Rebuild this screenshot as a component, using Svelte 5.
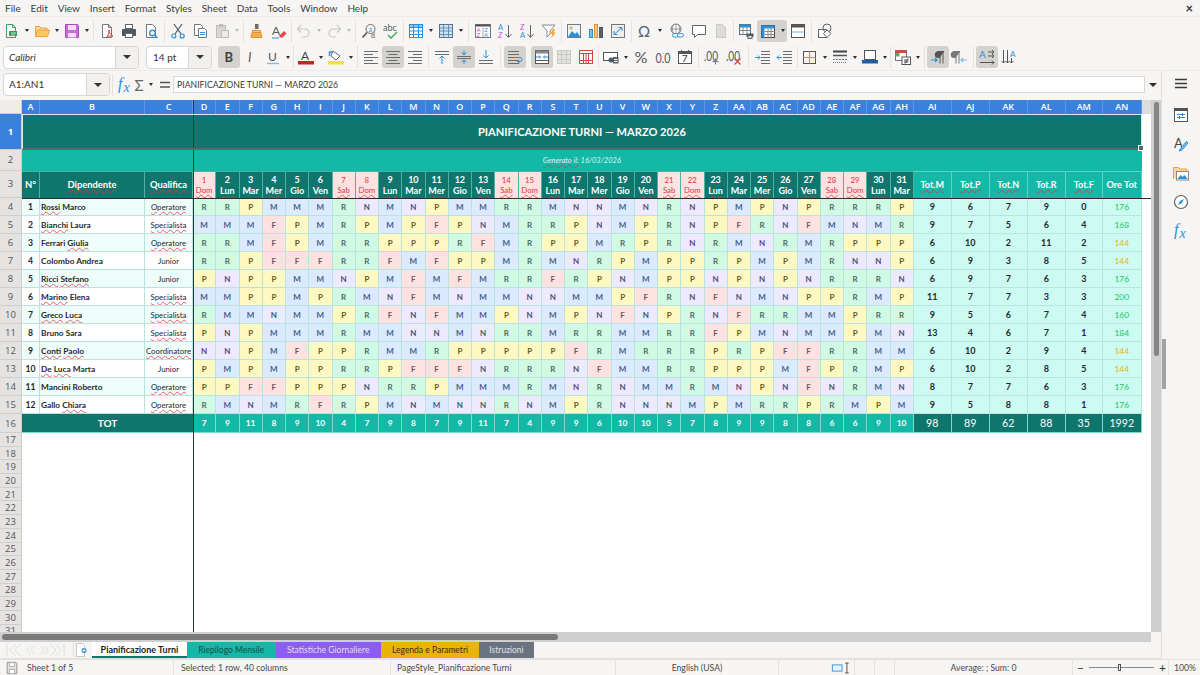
<script>
	const menus = ['File', 'Edit', 'View', 'Insert', 'Format', 'Styles', 'Sheet', 'Data', 'Tools', 'Window', 'Help'];

	const flagged = new Set([
		'Rossi', 'Bianchi', 'Giulia', 'Ricci', 'Stefano', 'Marino', 'Greco', 'Luca', 'Conti', 'Paolo', 'De', 'Chiara',
		'Operatore', 'Specialista', 'Coordinatore', 'Dipendente', 'Qualifica', 'Generato', 'il:',
		'Lun', 'Mer', 'Ven', 'Sab', 'Dom', 'Tot.M', 'Tot.P', 'Tot.N', 'Tot.R', 'Tot.F'
	]);

	const colNames = ['A', 'B', 'C', 'D', 'E', 'F', 'G', 'H', 'I', 'J', 'K', 'L', 'M', 'N', 'O', 'P', 'Q', 'R', 'S', 'T', 'U', 'V', 'W', 'X', 'Y', 'Z',
		'AA', 'AB', 'AC', 'AD', 'AE', 'AF', 'AG', 'AH', 'AI', 'AJ', 'AK', 'AL', 'AM', 'AN'];

	const weekdays = ['Dom', 'Lun', 'Mar', 'Mer', 'Gio', 'Ven', 'Sab'];
	const days = Array.from({ length: 31 }, (_, i) => ({ n: i + 1, name: weekdays[i % 7], off: i % 7 === 0 || i % 7 === 6 }));

	const people = [
		{ name: 'Rossi Marco', role: 'Operatore', shifts: 'RRPMMMRNMNPMMRRMNNMNRNPMPNPRRRP', tot: [9, 6, 7, 9, 0], ore: 176 },
		{ name: 'Bianchi Laura', role: 'Specialista', shifts: 'MMMFPMRPMPFPNMRRPNMPRNPFRNFMNMR', tot: [9, 7, 5, 6, 4], ore: 168 },
		{ name: 'Ferrari Giulia', role: 'Operatore', shifts: 'RRMFPMRRPPPRFMRPPMRPRNRMNRMRPPP', tot: [6, 10, 2, 11, 2], ore: 144 },
		{ name: 'Colombo Andrea', role: 'Junior', shifts: 'RRPFFFRRFMFPPMRMNRPMPPRPMPMRNNP', tot: [6, 9, 3, 8, 5], ore: 144 },
		{ name: 'Ricci Stefano', role: 'Junior', shifts: 'PNPPMMNPMFMFMRRFRPNMPPNPNPNRRRN', tot: [6, 9, 7, 6, 3], ore: 176 },
		{ name: 'Marino Elena', role: 'Specialista', shifts: 'MMPPMPRMNFMNMMNNMMPFRNFNMNPPRMP', tot: [11, 7, 7, 3, 3], ore: 200 },
		{ name: 'Greco Luca', role: 'Specialista', shifts: 'RMMNMMPRFNFMMPNMPNFNPRNFRRMMPRR', tot: [9, 5, 6, 7, 4], ore: 160 },
		{ name: 'Bruno Sara', role: 'Specialista', shifts: 'PNPMMMRMMNNMNRRMRRMMRRFPMNMMPMN', tot: [13, 4, 6, 7, 1], ore: 184 },
		{ name: 'Conti Paolo', role: 'Coordinatore', shifts: 'NNPMFPPRMMRPPPPPFRMRRRPRPFFRRMM', tot: [6, 10, 2, 9, 4], ore: 144 },
		{ name: 'De Luca Marta', role: 'Junior', shifts: 'PMPMPPRRPFFFNRRRNFMMRRPPPMFPRMP', tot: [6, 10, 2, 8, 5], ore: 144 },
		{ name: 'Mancini Roberto', role: 'Operatore', shifts: 'PPFFPPPNRRPMMMRMNRNMMRMNPNFNRMN', tot: [8, 7, 7, 6, 3], ore: 176 },
		{ name: 'Gallo Chiara', role: 'Operatore', shifts: 'RMNMRFRPMNMNNRNMPRNNNMPMRRPRMPM', tot: [9, 5, 8, 8, 1], ore: 176 }
	];

	const dayTotals = [7, 9, 11, 8, 9, 10, 4, 7, 9, 8, 7, 9, 11, 7, 4, 9, 9, 6, 10, 10, 5, 7, 8, 9, 9, 8, 8, 6, 6, 9, 10];
	const grandTotals = [98, 89, 62, 88, 35, 1992];
	const emptyRows = Array.from({ length: 15 }, (_, i) => i + 17);

	// split on spaces so the spellcheck squiggle only lands on the flagged words
	const words = (text) => text.split(' ').map((w) => ({ w, bad: flagged.has(w) }));

	const bars = (ys, x1, x2, c = '#6b6b6b') => `<path d="${ys.map((y) => `M${x1} ${y}H${x2}`).join('')}" stroke="${c}"/>`;
	const lbl = (x, y, t, size, c, extra = '') =>
		`<text x="${x}" y="${y}" font-family="Lato, sans-serif" font-size="${size}" fill="${c}" stroke="none" ${extra}>${t}</text>`;
	const pilcrow = (x, c) =>
		`<path d="M${x + 6} 2.5H${x}a3.2 3.2 0 000 6.4h1.5" fill="${c}" stroke="none"/><path d="M${x - 1} 2.5h7M${x + 2} 2.5v12M${x + 5} 2.5v12" stroke="${c}"/>`;
	const FIVE = [2.5, 5.5, 8.5, 11.5, 14.5];

	const icons = {
		new: `<path d="M2.5 1.5h6l3 3v10h-9z" fill="#fff" stroke="#3f9e63"/><path d="M8.5 1.5v3h3" stroke="#3f9e63"/><rect x="5" y="8" width="8" height="5" fill="#2f9a5c"/><path d="M7 10h5M7 12h4" stroke="#bfe6cd"/>`,
		open: `<path d="M1.5 13.5v-10h4l1.5 1.5h6v2" fill="#fbd79b" stroke="#e9a441"/><path d="M1.5 13.5l2-6.5h12l-2 6.5z" fill="#fcc56e" stroke="#e9a441"/>`,
		save: `<path d="M1.5 1.5h12l1 1v12h-13z" fill="#c76fd6" stroke="#a64bb8"/><rect x="4" y="2" width="8" height="5" fill="#f4dcf8"/><rect x="4" y="10" width="8" height="4.5" fill="#f4dcf8"/>`,
		pdf: `<path d="M3.5 1.5h6l3 3v10h-9z" fill="#fff" stroke="#777"/><path d="M9.5 1.5v3h3" stroke="#777"/><path d="M8 14c2-3 2-6 2-7 0 3 2 5 4 6-3 0-4 0-6 1z" stroke="#d9453d"/>`,
		print: `<rect x="4.5" y="1.5" width="7" height="4" fill="#fff" stroke="#666"/><path d="M1.5 6.5h13v6h-13z" fill="#4b5965" stroke="#4b5965"/><rect x="4.5" y="10.5" width="7" height="4" fill="#fff" stroke="#666"/>`,
		preview: `<path d="M3.5 1.5h6l3 3v10h-9z" fill="#fff" stroke="#777"/><circle cx="9.5" cy="10" r="2.8" stroke="#2d8fd5" stroke-width="1.4"/><path d="M11.5 12l3 3" stroke="#2d8fd5" stroke-width="1.6"/>`,
		cut: `<path d="M4 1l7 10M12 1L5 11" stroke="#4b5965" stroke-width="1.2"/><circle cx="3.8" cy="13" r="2" stroke="#2d8fd5" stroke-width="1.2"/><circle cx="12.2" cy="13" r="2" stroke="#2d8fd5" stroke-width="1.2"/>`,
		copy: `<path d="M2.5 1.5h6l2 2v9h-8z" fill="#fff" stroke="#777"/><path d="M6.5 5.5h6l2 2v7h-8z" fill="#fff" stroke="#777"/>${bars([9.5, 11.5], 8, 13, '#2d8fd5')}`,
		paste: `<rect x="2.5" y="2.5" width="9" height="12" fill="#d6d6d4" stroke="#bdbdbb"/><rect x="5" y="1" width="4" height="3" fill="#bdbdbb"/><rect x="7.5" y="7.5" width="7" height="7" fill="#ecebe9" stroke="#bdbdbb"/>`,
		clone: `<rect x="6" y="1" width="3.5" height="5" fill="#6b6b6b"/><path d="M3.5 7.5h8v2h-8z" fill="#f8c471" stroke="#e0943a"/><path d="M3 9.5h9l1 5H2z" fill="#f6ae4b" stroke="#e0943a"/>`,
		clear: `${lbl(1, 12, 'A', 12, '#55606b')}<path d="M8 13l5-5 2.5 2.5-4 4H9z" fill="#e8444b"/><path d="M1 15h7" stroke="#2d8fd5"/>`,
		undo: `<path d="M5 2L1.5 6 5 9.5M2 6h7a4 4 0 010 8H6" stroke="#c8c8c6" stroke-width="1.2"/>`,
		redo: `<path d="M11 2l3.5 4L11 9.5M14 6H7a4 4 0 000 8h3" stroke="#c8c8c6" stroke-width="1.2"/>`,
		find: `<circle cx="9.5" cy="6" r="4.5" stroke="#6b6b6b"/>${lbl(7.5, 8.5, 'a', 7, '#2d8fd5')}<path d="M6 9.5L1.5 14.5" stroke="#555" stroke-width="1.6"/>${lbl(10, 15, 'd', 7, '#555')}`,
		spell: `${lbl(0, 8, 'abc', 9, '#55606b')}<path d="M5 12l3 3 6-6" stroke="#3da560" stroke-width="1.4"/>`,
		table: `<rect x="1.5" y="1.5" width="13" height="13" fill="#fff" stroke="#2d8fd5"/><rect x="1.5" y="1.5" width="13" height="3" fill="#8cc4ea" stroke="#2d8fd5"/><path d="M5.5 1.5v13M10.5 1.5v13M1.5 8h13M1.5 11.5h13" stroke="#2d8fd5"/>`,
		cols: `<rect x="1.5" y="1.5" width="13" height="13" fill="#cfe5f6" stroke="#5f6f7f"/><path d="M5.5 1.5v13M10.5 1.5v13M1.5 5h13M1.5 8h13M1.5 11.5h13" stroke="#5f8fb7"/>`,
		sortbox: `<rect x="0.5" y="1.5" width="15" height="13" fill="#fff" stroke="#777"/><rect x="0.5" y="1.5" width="15" height="2" fill="#555"/><path d="M8 3v11" stroke="#aaa"/>${lbl(1.5, 9, 'A', 6, '#c14fd0')}${lbl(1.5, 14, 'Z', 6, '#c14fd0')}${lbl(9, 9, 'Z', 6, '#2d8fd5')}${lbl(9, 14, 'A', 6, '#2d8fd5')}`,
		sortasc: `${lbl(1, 7, 'A', 7.5, '#2d8fd5')}${lbl(1, 15, 'Z', 7.5, '#c14fd0')}<path d="M11.5 2v12M8.5 11l3 3.5 3-3.5" stroke="#666"/>`,
		sortdesc: `${lbl(1, 7, 'Z', 7.5, '#c14fd0')}${lbl(1, 15, 'A', 7.5, '#2d8fd5')}<path d="M11.5 2v12M8.5 11l3 3.5 3-3.5" stroke="#666"/>`,
		filter: `<path d="M1 2h13L9 8v3l-3 3V8z" fill="#fff" stroke="#8a8a8a"/><path d="M12 6l-3 5h2.5L10 15.5 15 9.5h-2.5L14 6z" fill="#f2a53a"/>`,
		image: `<rect x="1.5" y="1.5" width="13" height="13" fill="#e9f4fb" stroke="#777"/><circle cx="5" cy="5" r="1.5" fill="#f2a53a"/><path d="M2 14l4-6 3 3 2-2 3.5 5z" fill="#2d8fd5"/>`,
		chart: `<rect x="1.5" y="6.5" width="3" height="8" fill="#7cbbe8" stroke="#2d8fd5"/><rect x="6.5" y="1.5" width="3" height="13" fill="#f8c471" stroke="#e0943a"/><rect x="11.5" y="4.5" width="3" height="10" fill="#55606b" stroke="#4b5965"/>`,
		pivot: `<rect x="1.5" y="1.5" width="13" height="13" fill="#eee" stroke="#777"/><path d="M4 11.5L12 4.5M12 4.5H8.5M12 4.5V8M4 11.5h3.5M4 11.5V8" stroke="#2d8fd5"/>`,
		omega: `${lbl(1, 14, 'Ω', 15, '#55606b')}`,
		link: `<circle cx="7" cy="6" r="5" fill="#fff" stroke="#777"/><path d="M2 6h10M7 1v10M4.5 1.8c-1.5 3-1.5 5.4 0 8.4M9.5 1.8c1.5 3 1.5 5.4 0 8.4" stroke="#777" stroke-width=".7"/><rect x="3.5" y="10.5" width="6" height="3.5" rx="1.7" fill="#fff" stroke="#2d8fd5"/><rect x="8.5" y="10.5" width="6" height="3.5" rx="1.7" fill="#fff" stroke="#2d8fd5"/>`,
		comment: `<path d="M1.5 2.5h13v9h-8l-3 3v-3h-2z" fill="#fff" stroke="#666"/>`,
		sheetdoc: `<path d="M3.5 1.5h6l3 3v10h-9z" fill="#dcdcda" stroke="#c8c8c6"/>`,
		printarea: `<rect x="1.5" y="1.5" width="11" height="10" fill="#fff" stroke="#666"/><rect x="1.5" y="1.5" width="11" height="3" fill="#2d8fd5"/><path d="M5 4v8M9 4v8M1.5 7.5h11" stroke="#8a8a8a"/><path d="M8.5 10.5h7v3.5h-7z" fill="#4b5965"/><rect x="10" y="12.5" width="4" height="3" fill="#ddd" stroke="#666"/>`,
		freeze: `<rect x="1.5" y="2.5" width="13" height="12" fill="#fff" stroke="#444"/><rect x="1.5" y="2.5" width="13" height="3" fill="#2d8fd5"/><rect x="1.5" y="2.5" width="3" height="12" fill="#2d8fd5"/><path d="M8 5.5v9M11 5.5v9M4.5 8.5h10M4.5 11.5h10" stroke="#8a8a8a"/>`,
		split: `<rect x="1.5" y="1.5" width="13" height="13" fill="#fff" stroke="#555"/><rect x="1.5" y="1.5" width="13" height="3" fill="#555"/><path d="M1.5 9h13" stroke="#2d8fd5" stroke-dasharray="2 1"/>`,
		shapes: `<rect x="1.5" y="6.5" width="8" height="8" fill="#fff" stroke="#666"/><circle cx="10" cy="5" r="4" fill="none" stroke="#666"/><path d="M10 7l4 3.5-4 4-3.5-4z" fill="#fff" stroke="#666"/>`,

		bold: `${lbl(3.5, 13, 'B', 13, '#3f3f3f', 'font-weight="700"')}`,
		italic: `${lbl(5, 13, 'I', 13, '#555', 'font-style="italic"')}`,
		under: `${lbl(3, 12, 'U', 12, '#555')}<path d="M2 14.5h12" stroke="#7cbbe8" stroke-width="1.4"/>`,
		fontcolor: `${lbl(3, 11, 'A', 12, '#444')}<rect x="0" y="12" width="16" height="3.5" fill="#c9211e"/>`,
		highlight: `<path d="M5 2l7 5-4 4-5-4z" fill="#fff" stroke="#666"/><path d="M1.5 7V3h3" stroke="#2d8fd5" stroke-width="1.4"/><rect x="0" y="12" width="16" height="3.5" fill="#f5e625"/>`,
		left: `<path d="M1 2.5h14M1 5.5h9M1 8.5h14M1 11.5h9M1 14.5h14" stroke="#6b6b6b"/>`,
		center: `<path d="M1 2.5h14M3.5 5.5h9M1 8.5h14M3.5 11.5h9M1 14.5h14" stroke="#6b6b6b"/>`,
		right: `<path d="M1 2.5h14M6 5.5h9M1 8.5h14M6 11.5h9M1 14.5h14" stroke="#6b6b6b"/>`,
		vtop: `${bars([2.5, 5.5], 1, 15)}<path d="M8 15V7M5.5 9.5L8 7l2.5 2.5" stroke="#2d8fd5"/>`,
		vcenter: `${bars([7.5, 9.5], 1, 15)}<path d="M8 1v5M5.5 3.5L8 6l2.5-2.5M8 15v-4M5.5 13L8 11l2.5 2" stroke="#2d8fd5"/>`,
		vbottom: `${bars([11.5, 14.5], 1, 15)}<path d="M8 1v8M5.5 6.5L8 9l2.5-2.5" stroke="#2d8fd5"/>`,
		wrap: `${bars(FIVE, 1, 12)}<path d="M6 8.5h7a1.5 1.5 0 010 4H11M12.5 11l-2 1.5 2 1.5" stroke="#2d8fd5"/>`,
		merge: `<rect x="1.5" y="1.5" width="13" height="13" fill="#fff" stroke="#555"/><rect x="1.5" y="1.5" width="13" height="3" fill="#888"/><path d="M1.5 11.5h13" stroke="#555"/><path d="M2 8h4.5M14 8H9.5M5 6.5L6.5 8 5 9.5M11 6.5L9.5 8l1.5 1.5" stroke="#2d8fd5"/>`,
		unmerge: `<rect x="1.5" y="1.5" width="13" height="13" fill="#e2e2e0" stroke="#c8c8c6"/><path d="M5.5 1.5v13M10.5 1.5v13M1.5 5.5h13M1.5 10.5h13" stroke="#c8c8c6"/>`,
		splitcell: `<rect x="1.5" y="1.5" width="13" height="13" fill="#fff" stroke="#d9453d"/><path d="M5.5 4v10.5M8 4v10.5M10.5 4v10.5M1.5 4.5h13M1.5 11.5h13" stroke="#d9453d"/>`,
		currency: `<rect x="0.5" y="3.5" width="14" height="8" fill="#fff" stroke="#555"/><circle cx="8" cy="11" r="2.5" fill="#4b5965"/><rect x="10" y="8" width="5.5" height="6.5" fill="#55606b"/><path d="M11 10.5h3.5M11 12.5h3.5" stroke="#fff"/>`,
		percent: `${lbl(1.5, 13.5, '%', 15, '#555', 'textLength="13" lengthAdjust="spacingAndGlyphs"')}`,
		number: `${lbl(0.5, 13.5, '0.0', 14, '#555', 'textLength="15" lengthAdjust="spacingAndGlyphs"')}`,
		date: `<rect x="1.5" y="2.5" width="13" height="12" fill="#fff" stroke="#555"/><rect x="1.5" y="2.5" width="13" height="2.5" fill="#555"/><path d="M4.5 1v2M11.5 1v2" stroke="#555"/>${lbl(5, 13, '7', 9.5, '#555', 'font-weight="700"')}`,
		adddec: `${lbl(0, 11.5, '.00', 12.5, '#555', 'textLength="14" lengthAdjust="spacingAndGlyphs"')}<path d="M11.5 9.5v6M8.5 12.5h6" stroke="#2d8fd5" stroke-width="1.2"/>`,
		deldec: `${lbl(0, 11.5, '.00', 12.5, '#555', 'textLength="14" lengthAdjust="spacingAndGlyphs"')}<path d="M8.5 9.5l6 6M14.5 9.5l-6 6" stroke="#d9453d" stroke-width="1.2"/>`,
		indent: `${bars(FIVE, 6, 15)}<path d="M0 8.5h5M3 6.5l2 2-2 2" stroke="#2d8fd5"/>`,
		outdent: `${bars(FIVE, 6, 15)}<path d="M0 8.5h5M2 6.5l-2 2 2 2" stroke="#2d8fd5"/>`,
		borders: `<rect x="1.5" y="2.5" width="12" height="12" stroke="#555"/><path d="M7.5 2.5v12M1.5 8.5h12" stroke="#d98a30"/>`,
		bstyle: `<path d="M1 2.5h14" stroke="#444" stroke-width="2"/><path d="M1 6.5h14" stroke="#555" stroke-width="1.5"/><path d="M1 10.5h14" stroke="#777" stroke-dasharray="2 1"/><path d="M1 13.5h14" stroke="#777" stroke-dasharray="1 1"/>`,
		bcolor: `<rect x="2.5" y="1.5" width="11" height="9" fill="#fff" stroke="#555"/><rect x="0" y="11" width="16" height="3.5" fill="#1c5fa8"/>`,
		cond: `<rect x="0.5" y="1.5" width="11" height="10" fill="#fff" stroke="#777"/><rect x="0.5" y="1.5" width="11" height="2.5" fill="#d9453d"/><rect x="0.5" y="4" width="4" height="3.5" fill="#4fae6b"/><rect x="7" y="8" width="8.5" height="7.5" fill="#fff" stroke="#555"/><path d="M9 11h4.5M9 13h4.5M10 14.5l3-5" stroke="#444"/>`,
		ltr: `${pilcrow(8, '#555')}<path d="M1 11h6M5 9l2 2-2 2" stroke="#2d8fd5" stroke-width="1.2"/>`,
		rtl: `${pilcrow(2, '#777')}<path d="M15 11H9M11 9l-2 2 2 2" stroke="#7cbbe8" stroke-width="1.2"/>`,
		horiz: `${lbl(0, 9, 'A', 10, '#2d8fd5')}<path d="M9 3h6M13 1l2 2-2 2M9 7h6M13 5l2 2-2 2M1 13.5h14M13 11.5l2 2-2 2" stroke="#555"/>`,
		vert: `<path d="M2.5 1v13M.5 12l2 2 2-2M6.5 1v13M4.5 12l2 2 2-2M10.5 9v5M8.5 12l2 2 2-2" stroke="#555"/>${lbl(9, 8, 'A', 8, '#2d8fd5')}`,

		burger: `<path d="M2 3.5h12M2 7.5h12M2 11.5h12" stroke="#3a3a3a" stroke-width="1.4"/>`,
		props: `<rect x="1.5" y="1.5" width="13" height="13" fill="#fff" stroke="#555"/><rect x="1.5" y="1.5" width="13" height="2.5" fill="#555"/><path d="M4 7.5h8M4 10.5h8" stroke="#2d8fd5"/><path d="M9.5 6v3M6.5 9v3" stroke="#2d8fd5"/>`,
		styles: `${lbl(1, 12, 'A', 13, '#444')}<path d="M6 15l3-1 6-7-1.5-1.5-6 7z" fill="#7cbbe8" stroke="#2d8fd5"/>`,
		gallery: `<path d="M.5 14V2.5h5L7 4h7v2" fill="#fbd79b" stroke="#e9a441"/><rect x="3.5" y="6.5" width="12" height="8.5" fill="#fff" stroke="#888"/><path d="M4.5 14l3-4 2 2 2-2 3 4z" fill="#2d8fd5"/>`,
		nav: `<circle cx="8" cy="8" r="6.5" fill="#fff" stroke="#666" stroke-width="1.2"/><path d="M11 5L9 9 5 11l2-4z" fill="#2d8fd5"/>`,
		fx: `<text x="1" y="12" font-family="Liberation Serif, serif" font-style="italic" font-size="16" fill="#2d8fd5">f</text><text x="6.5" y="14.5" font-family="Liberation Serif, serif" font-style="italic" font-size="14" fill="#2d8fd5">x</text>`,
		sigma: `${lbl(2.5, 14, 'Σ', 15, '#666')}`,
		equals: `<path d="M3 5.5h10M3 10h10" stroke="#555" stroke-width="1.6"/>`
	};

	const topTools = ['new', 'v', 'open', 'v', 'save', 'v', '|', 'pdf', 'print', 'preview', '|', 'cut', 'copy', 'paste', 'g', '|',
		'clone', 'clear', '!', 'undo', 'g', 'redo', 'g', '|', 'find', 'spell', '!', 'table', 'v', 'cols', 'v', '#',
		'sortbox', 'sortasc', 'sortdesc', 'filter', '!', 'image', 'chart', 'pivot', '|', 'omega', 'v', '~', 'link', 'comment', 'sheetdoc', '!',
		'printarea', 'freeze*', 'v*', 'split', '|', 'shapes'];

	const fontTools = ['bold*', 'italic', 'under', 'v', '!', 'fontcolor', 'v', 'highlight', 'v', '|', 'left', 'center*', 'right', '|',
		'vtop', 'vcenter*', 'vbottom', '#', 'wrap*', '_', 'merge*', 'unmerge', 'splitcell', '!', 'currency', 'v', 'percent', 'number', 'date', '|',
		'adddec', 'deldec', '#', 'indent', 'outdent', '!', 'borders', 'v', 'bstyle', 'v', 'bcolor', 'v', '!', 'cond', 'v', '|', 'ltr*', 'rtl', '|', 'horiz*', 'vert'];

	const sideIcons = ['props', 'styles', 'gallery', 'nav', 'fx'];

	const tabs = [
		{ label: 'Pianificazione Turni', cls: 'current' },
		{ label: 'Riepilogo Mensile', cls: 'teal' },
		{ label: 'Statistiche Giornaliere', cls: 'purple' },
		{ label: 'Legenda e Parametri', cls: 'amber' },
		{ label: 'Istruzioni', cls: 'slate' }
	];

	const statusCells = [
		{ cls: 'c-sheet', text: 'Sheet 1 of 5' },
		{ cls: 'c-sel', text: 'Selected: 1 row, 40 columns' },
		{ cls: 'c-page', text: 'PageStyle_Pianificazione Turni' },
		{ cls: 'c-lang', text: 'English (USA)' }
	];
</script>

{#snippet glyph(name)}
	<svg class="ico" width="16" height="16" viewBox="0 0 16 16" fill="none" aria-hidden="true">{@html icons[name]}</svg>
{/snippet}

{#snippet tools(list)}
	{#each list as token}
		{#if token === '|' || token === '!' || token === '#'}
			<span class="sep" class:thin={token === '!'} class:wide={token === '#'}></span>
		{:else if token === '~'}
			<span class="spacer"></span>
		{:else if token === '_'}
			<span class="spacer gap"></span>
		{:else if token === 'v' || token === 'v*' || token === 'g'}
			<span class="drop" class:on={token === 'v*'} class:off={token === 'g'}></span>
		{:else}
			<span class="btn" class:on={token.endsWith('*')} class:joined={token === 'freeze*'}>
				{@render glyph(token.replace('*', ''))}
			</span>
		{/if}
	{/each}
{/snippet}

{#snippet spell(text)}
	<span>{#each words(text) as part, i}{i ? ' ' : ''}<span class:bad={part.bad}>{part.w}</span>{/each}</span>
{/snippet}

<div class="app">
	<nav class="menubar">
		{#each menus as m}
			<span>{m}</span>
		{/each}
		<span class="close">×</span>
	</nav>

	<div class="toolbar first">
		{@render tools(topTools)}
	</div>

	<div class="toolbar second">
		<div class="combo font"><span class="value">Calibri</span><span class="combo-arrow"></span></div>
		<div class="combo size"><span class="value">14 pt</span><span class="combo-arrow"></span></div>
		{@render tools(fontTools)}
	</div>

	<div class="workspace">
		<div class="left">
			<div class="formula">
				<div class="combo name"><span class="value">A1:AN1</span><span class="combo-arrow"></span></div>
				<span class="sep"></span>
				<span class="fbtn">{@render glyph('fx')}</span>
				<span class="fbtn">{@render glyph('sigma')}</span>
				<span class="drop"></span>
				<span class="fbtn eq">{@render glyph('equals')}</span>
				<div class="input">PIANIFICAZIONE TURNI — MARZO 2026</div>
				<span class="drop big"></span>
			</div>

			<div class="sheet-row">
				<div class="sheet">
					<div class="corner"></div>
					{#each colNames as name}
						<div class="colhead">{name}</div>
					{/each}
					<div class="colhead rest"></div>

					<div class="rowhead active">1</div>
					<div class="title">PIANIFICAZIONE TURNI — MARZO 2026</div>
					<div class="blank"></div>

					<div class="rowhead">2</div>
					<div class="subtitle">{@render spell('Generato il: 16/03/2026')}</div>
					<div class="blank"></div>

					<div class="rowhead">3</div>
					<div class="hd">N°</div>
					<div class="hd">{@render spell('Dipendente')}</div>
					<div class="hd">{@render spell('Qualifica')}</div>
					{#each days as d}
						<div class="day" class:off={d.off}>
							<span>{d.n}</span>
							{@render spell(d.name)}
						</div>
					{/each}
					{#each ['Tot.M', 'Tot.P', 'Tot.N', 'Tot.R', 'Tot.F'] as t}
						<div class="hd mid">{@render spell(t)}</div>
					{/each}
					<div class="hd mid plain">Ore Tot</div>
					<div class="blank"></div>

					{#each people as p, i}
						<div class="rowhead">{i + 4}</div>
						<div class="cell num" class:tint={i % 2 === 0}>{i + 1}</div>
						<div class="cell person" class:tint={i % 2 === 0}>{@render spell(p.name)}</div>
						<div class="cell role" class:tint={i % 2 === 0}>{@render spell(p.role)}</div>
						{#each p.shifts.split('') as s}
							<div class="cell shift {s}">{s}</div>
						{/each}
						{#each p.tot as v}
							<div class="cell sum">{v}</div>
						{/each}
						<div class="cell sum ore" class:low={p.ore < 150}>{p.ore}</div>
						<div class="blank"></div>
					{/each}

					<div class="rowhead">16</div>
					<div class="tot-label">TOT</div>
					{#each dayTotals as v}
						<div class="tot-day">{v}</div>
					{/each}
					{#each grandTotals as v}
						<div class="tot-grand">{v}</div>
					{/each}
					<div class="blank"></div>

					{#each emptyRows as r}
						<div class="rowhead">{r}</div>
						<div class="empty"></div>
					{/each}

					<div class="freeze-v"></div>
					<div class="freeze-h"></div>
					<div class="selection"><span class="handle"></span></div>
				</div>
				<div class="vscroll"><span class="vthumb"></span></div>
			</div>

			<div class="hscroll"><span class="hthumb"></span></div>

			<div class="tabbar">
				<svg class="nav-arrows" width="61" height="16" viewBox="0 0 62 16" fill="none" aria-hidden="true">
					<path d="M2 2v12M11 2L5 8l6 6M16 2l-6 6 6 6M26 4l-4 4 4 4M30 4l-4 4 4 4M36 4l4 4-4 4M40 4l4 4-4 4M46 2l6 6-6 6M51 2l6 6-6 6M60 2v12" stroke="#dcdcda" />
				</svg>
				<span class="tab-sep"></span>
				<svg class="add-sheet" width="16" height="16" viewBox="0 0 16 16" fill="none" aria-hidden="true">
					<path d="M1.5 1.5h6l2 2v11h-8z" fill="#fff" stroke="#c8c8c6" />
					<circle cx="9" cy="8.5" r="2.5" fill="#2d8fd5" />
					<path d="M7.5 8.5h3M9 7v3" stroke="#fff" />
				</svg>
				{#each tabs as tab}
					<span class="tab {tab.cls}">{tab.label}</span>
				{/each}
			</div>
		</div>

		<aside class="sidebar">
			<span class="side-burger">{@render glyph('burger')}</span>
			{#each sideIcons as name}
				<span class="side-btn">{@render glyph(name)}</span>
			{/each}
			<span class="side-handle"></span>
		</aside>
	</div>

	<footer class="status">
		<div class="st c-doc">
			<svg width="14" height="14" viewBox="0 0 16 16" fill="none" aria-hidden="true">
				<path d="M2.5 1.5h10l1 1v12h-11z" fill="#e4e4e2" stroke="#8a8a8a" />
				<rect x="5" y="2" width="6" height="4" fill="#fff" stroke="#aaa" />
				<rect x="5" y="9.5" width="6" height="5" fill="#fff" stroke="#aaa" />
			</svg>
		</div>
		{#each statusCells as c}
			<div class="st {c.cls}">{c.text}</div>
		{/each}
		<div class="st c-mode">
			<svg width="26" height="14" viewBox="0 0 26 14" fill="none" aria-hidden="true">
				<rect x="1.5" y="3.5" width="11" height="7" fill="#e8f2fa" stroke="#2d8fd5" />
				<path d="M16 1.5h4M16 12.5h4M18 1.5v11" stroke="#444" />
			</svg>
		</div>
		<div class="st c-a"></div>
		<div class="st c-b"></div>
		<div class="st c-sum">Average: ; Sum: 0</div>
		<div class="st c-zoom">
			<span class="zbtn">−</span>
			<span class="track"><span class="knob"></span></span>
			<span class="zbtn">+</span>
		</div>
		<div class="st c-pct">100%</div>
	</footer>
</div>

<style>
	:global(body) {
		margin: 0;
		background: #f6f5f4;
	}

	.app {
		width: 1200px;
		height: 675px;
		overflow: hidden;
		display: flex;
		flex-direction: column;
		background: #f6f5f4;
		color: #3d3d3d;
		font-family: Lato, 'Noto Sans', sans-serif;
		font-size: 10px;
	}

	.ico {
		overflow: visible;
	}

	.menubar {
		height: 17px;
		flex: none;
		display: flex;
		align-items: center;
		gap: 9.9px;
		padding-left: 5px;
		font-size: 10px;
		border-bottom: 1px solid #ecebe9;
		box-sizing: border-box;
	}

	.close {
		margin-left: auto;
		margin-right: 7px;
		font-size: 13px;
		font-weight: 700;
		color: #333;
	}

	.toolbar {
		flex: none;
		height: 27px;
		display: flex;
		align-items: center;
		box-sizing: border-box;
	}

	.first {
		padding-left: 1px;
	}

	.second {
		padding-left: 3px;
		border-bottom: 1px solid #ecebe9;
	}

	.btn {
		width: 22px;
		height: 22px;
		flex: none;
		display: flex;
		align-items: center;
		justify-content: center;
		border-radius: 3px;
	}

	.btn.on,
	.drop.on {
		background: #d3d2cf;
	}

	.btn.joined {
		border-radius: 3px 0 0 3px;
	}

	.drop {
		width: 8px;
		height: 22px;
		flex: none;
		display: flex;
		align-items: center;
		justify-content: center;
	}

	.drop.on {
		border-radius: 0 3px 3px 0;
	}

	.drop::after {
		content: '';
		border-left: 2.5px solid transparent;
		border-right: 2.5px solid transparent;
		border-top: 3px solid #2e2e2e;
	}

	.drop.off::after {
		border-top-color: #b9b9b7;
	}

	.drop.big::after {
		border-left-width: 4px;
		border-right-width: 4px;
		border-top-width: 4px;
	}

	.sep {
		width: 5px;
		height: 22px;
		flex: none;
		display: flex;
		justify-content: center;
	}

	.sep::after {
		content: '';
		width: 1px;
		background: #e4e3e1;
	}

	.sep.thin {
		width: 3px;
	}

	.sep.wide {
		width: 7px;
	}

	.spacer {
		width: 2px;
		flex: none;
	}

	.spacer.gap {
		width: 5px;
	}

	.combo {
		height: 23px;
		display: flex;
		flex: none;
		box-sizing: border-box;
		border: 1px solid #d7d6d4;
		border-radius: 4px;
		background: #fff;
		overflow: hidden;
	}

	.combo .value {
		flex: 1;
		padding-left: 5px;
		line-height: 21px;
		font-size: 10px;
		color: #333;
	}

	.combo-arrow {
		width: 22px;
		background: #f1f0ee;
		border-left: 1px solid #d7d6d4;
		display: flex;
		align-items: center;
		justify-content: center;
	}

	.combo-arrow::after {
		content: '';
		border-left: 4px solid transparent;
		border-right: 4px solid transparent;
		border-top: 4px solid #333;
	}

	.font {
		width: 136px;
		margin-right: 7px;
	}

	.font .value {
		font-style: italic;
	}

	.size {
		width: 66px;
		margin-right: 6px;
	}

	.size .value {
		padding-left: 6px;
	}

	.name {
		width: 107px;
		margin-left: 3px;
	}

	.workspace {
		flex: 1;
		min-height: 0;
		display: flex;
	}

	.left {
		width: 1161px;
		flex: none;
		display: flex;
		flex-direction: column;
		min-height: 0;
	}

	.formula {
		flex: none;
		height: 27px;
		display: flex;
		align-items: center;
	}

	.fbtn {
		width: 15px;
		height: 22px;
		flex: none;
		display: flex;
		align-items: center;
		justify-content: center;
	}

	.formula .sep {
		margin-right: 2px;
	}

	.eq {
		margin-left: 2.5px;
	}

	.input {
		flex: none;
		width: 972px;
		height: 17px;
		margin-left: 0.5px;
		box-sizing: border-box;
		padding-left: 3px;
		background: #fff;
		border: 1px solid #d9d8d6;
		font-size: 8.7px;
		line-height: 15px;
		color: #3a3a3a;
		white-space: nowrap;
	}

	.formula .drop.big {
		margin-left: 3px;
		width: 9px;
	}

	.sheet-row {
		flex: none;
		height: 534px;
		display: flex;
		padding-top: 2px;
		box-sizing: border-box;
	}

	.sheet {
		position: relative;
		width: 1151px;
		height: 532px;
		overflow: hidden;
		flex: none;
		background: #fff;
		display: grid;
		grid-template-columns: 22px 18px 105px 48px repeat(31, 23.258px) 38px 38px 38px 38px 37px 39px 9px;
		grid-template-rows: 14px 36px 20.5px 27.5px repeat(12, 18px) 19px repeat(15, 13.7px);
		font-family: Lato, 'Liberation Sans', sans-serif;
	}

	.corner {
		background: #eeedeb;
		border-right: 1px solid #cfcecb;
		border-bottom: 1px solid #cfcecb;
		box-sizing: border-box;
	}

	.colhead {
		background: #3a80df;
		border-right: 1px solid #5f97e6;
		box-sizing: border-box;
		color: #fff;
		font-family: 'Open Sans', 'Noto Sans', sans-serif;
		font-size: 9px;
		font-weight: 600;
		line-height: 14px;
		text-align: center;
		overflow: hidden;
	}

	.colhead.rest {
		background: #dddcda;
		border: 0;
	}

	.rowhead {
		grid-column: 1;
		background: #e4e3e1;
		border-bottom: 1px solid #cfcecb;
		border-right: 1px solid #cfcecb;
		box-sizing: border-box;
		color: #555;
		font-family: 'Open Sans', 'Noto Sans', sans-serif;
		font-size: 9.5px;
		display: flex;
		align-items: center;
		justify-content: center;
		overflow: hidden;
	}

	.rowhead.active {
		background: #3a80df;
		color: #fff;
		font-weight: 700;
	}

	.title {
		grid-column: span 40;
		background: #0f766e;
		color: #fff;
		font-size: 11.1px;
		font-weight: 700;
		display: flex;
		align-items: center;
		justify-content: center;
		padding-bottom: 2px;
		box-sizing: border-box;
	}

	.subtitle {
		grid-column: span 40;
		background: #14b8a6;
		color: #d5f7f0;
		font-size: 7.5px;
		font-style: italic;
		display: flex;
		align-items: center;
		justify-content: center;
		white-space: pre;
	}

	.hd {
		background: #0f766e;
		color: #fff;
		font-size: 9.4px;
		font-weight: 700;
		border-right: 1px solid #4fb0a3;
		border-top: 1px solid #4fb0a3;
		display: flex;
		align-items: center;
		justify-content: center;
		box-sizing: border-box;
		overflow: hidden;
	}

	.hd.mid {
		background: #14b8a6;
		border-color: #5fd2c4;
		font-size: 9px;
	}

	.hd.plain {
		font-size: 9.2px;
	}

	.day {
		display: flex;
		flex-direction: column;
		align-items: center;
		justify-content: center;
		background: #0f766e;
		color: #fff;
		border-right: 1px solid #4fb0a3;
		border-top: 1px solid #4fb0a3;
		box-sizing: border-box;
		font-size: 9px;
		font-weight: 700;
		line-height: 11px;
	}

	.day.off {
		background: #fee2e2;
		color: #e5333f;
		font-size: 7.8px;
		font-weight: 400;
		line-height: 10px;
	}

	.cell {
		display: flex;
		align-items: center;
		justify-content: center;
		border-right: 1px solid #b9e4dc;
		border-bottom: 1px solid #b9e4dc;
		box-sizing: border-box;
		background: #fff;
		color: #26282c;
		overflow: hidden;
		white-space: pre;
	}

	.cell.tint {
		background: #eefdf9;
	}

	.num {
		font-size: 8.6px;
		font-weight: 700;
	}

	.person {
		justify-content: flex-start;
		padding-left: 1px;
		font-size: 8.3px;
		font-weight: 700;
	}

	.role {
		font-size: 7.8px;
	}

	.shift {
		font-size: 8px;
		font-weight: 700;
		color: #4b5563;
	}

	.shift.P {
		background: #fef9c3;
		color: #665c1e;
	}

	.shift.M {
		background: #dbeafe;
		color: #475d87;
	}

	.shift.N {
		background: #ede9fe;
		color: #4f5170;
	}

	.shift.R {
		background: #d1fae5;
		color: #4d6b60;
	}

	.shift.F {
		background: #fee2e2;
		color: #6e5a5e;
	}

	.sum {
		background: #ccfbf1;
		font-size: 9px;
		font-weight: 700;
	}

	.ore {
		font-size: 8.4px;
		font-weight: 400;
		color: #22c55e;
	}

	.ore.low {
		color: #e7b416;
	}

	.tot-label {
		grid-column: span 3;
		background: #0f766e;
		color: #fff;
		font-size: 10px;
		font-weight: 700;
		display: flex;
		align-items: center;
		justify-content: center;
		border-bottom: 1px solid #7fd8cc;
		box-sizing: border-box;
	}

	.tot-day,
	.tot-grand {
		display: flex;
		align-items: center;
		justify-content: center;
		color: #fff;
		font-weight: 700;
		border-right: 1px solid #7fd8cc;
		border-bottom: 1px solid #7fd8cc;
		box-sizing: border-box;
	}

	.tot-day {
		background: #14b8a6;
		font-size: 8.4px;
	}

	.tot-grand {
		background: #0f766e;
		font-size: 10.6px;
		font-weight: 400;
	}

	.blank {
		background: #fff;
	}

	.empty {
		grid-column: span 41;
		background: #fff;
	}

	.bad {
		text-decoration: underline wavy rgba(224, 48, 58, 0.75) 1px;
		text-underline-offset: 1px;
	}

	.freeze-v {
		position: absolute;
		left: 193px;
		top: 0;
		bottom: 0;
		width: 1px;
		background: #2a3a3a;
	}

	.freeze-h {
		position: absolute;
		left: 22px;
		top: 98px;
		right: 0;
		height: 1px;
		background: #2e2e2e;
	}

	.selection {
		position: absolute;
		left: 22px;
		top: 14px;
		width: 1120px;
		height: 36px;
		box-sizing: border-box;
		border: 1px solid #d8ece8;
		border-bottom: 2px solid #56686a;
	}

	.handle {
		position: absolute;
		right: -3px;
		bottom: -3px;
		width: 4px;
		height: 4px;
		background: #56686a;
		border: 1px solid #fff;
	}

	.vscroll {
		flex: none;
		width: 10px;
		background: #cfcfcf;
		position: relative;
	}

	.vthumb {
		position: absolute;
		left: 3px;
		width: 5px;
		top: 2px;
		height: 254px;
		border-radius: 3px;
		background: #858585;
	}

	.hscroll {
		flex: none;
		height: 10px;
		width: 1151px;
		background: #cfcfcf;
		position: relative;
	}

	.hthumb {
		position: absolute;
		left: 2px;
		top: 2px;
		width: 556px;
		height: 6px;
		border-radius: 3px;
		background: #7a7a7a;
	}

	.tabbar {
		flex: none;
		height: 17px;
		display: flex;
		align-items: stretch;
		box-sizing: border-box;
		border-bottom: 1px solid #e2e1df;
	}

	.nav-arrows {
		margin-left: 5px;
		flex: none;
	}

	.tab-sep {
		width: 1px;
		background: #e0dfdd;
		margin: 1px 1px 1px 7px;
		flex: none;
	}

	.add-sheet {
		flex: none;
		margin-right: 1px;
	}

	.tab {
		display: flex;
		align-items: center;
		justify-content: center;
		font-size: 8.5px;
		box-sizing: border-box;
		white-space: nowrap;
	}

	.tab.current {
		width: 95px;
		background: #fff;
		color: #222;
		font-size: 9px;
		font-weight: 700;
		border-bottom: 2px solid #0f766e;
	}

	.tab.teal {
		width: 88.5px;
		background: #14b8a6;
		color: #134e4a;
	}

	.tab.purple {
		width: 105.5px;
		background: #8b5cf6;
		color: #e4dcff;
	}

	.tab.amber {
		width: 98px;
		background: #eab308;
		color: #3f2a05;
	}

	.tab.slate {
		width: 55px;
		background: #6b7280;
		color: #e0e2e6;
	}

	.sidebar {
		position: relative;
		flex: 1;
		border-left: 1px solid #dedddb;
		display: flex;
		flex-direction: column;
		align-items: center;
	}

	.side-burger {
		height: 16px;
		margin-top: 5px;
		margin-bottom: 15px;
	}

	.side-btn {
		height: 16px;
		margin-bottom: 13px;
		display: block;
	}

	.side-handle {
		position: absolute;
		left: 0;
		top: 268px;
		width: 4px;
		height: 50px;
		background: #a3a3a3;
	}

	.status {
		flex: none;
		height: 16px;
		display: flex;
		border-top: 1px solid #e2e1df;
		font-size: 8.7px;
		line-height: 15px;
		color: #4a4a4a;
		box-sizing: border-box;
	}

	.st {
		height: 100%;
		box-sizing: border-box;
		border-left: 1px solid #e4e3e1;
		white-space: nowrap;
		flex: none;
	}

	.c-doc {
		width: 24px;
		border: 0;
		padding-left: 5px;
		display: flex;
		align-items: center;
	}

	.c-sheet {
		width: 149px;
		border: 0;
		padding-left: 3px;
	}

	.c-sel {
		width: 217px;
		padding-left: 7px;
	}

	.c-page {
		width: 225px;
		padding-left: 6px;
	}

	.c-lang {
		width: 163px;
		text-align: center;
	}

	.c-mode {
		width: 76px;
		padding-left: 52px;
		display: flex;
		align-items: center;
	}

	.c-a,
	.c-b {
		width: 20px;
	}

	.c-sum {
		width: 178px;
		text-align: center;
	}

	.c-zoom {
		width: 96px;
		display: flex;
		align-items: center;
		gap: 4px;
		padding-left: 3px;
	}

	.zbtn {
		font-size: 12px;
		width: 9px;
		text-align: center;
		color: #333;
	}

	.track {
		position: relative;
		width: 65px;
		height: 1px;
		background: #8a8a8a;
	}

	.knob {
		position: absolute;
		left: 29px;
		top: -3px;
		width: 3px;
		height: 7px;
		background: #f6f5f4;
		border: 1px solid #555;
		box-sizing: border-box;
	}

	.c-pct {
		width: 33px;
		padding-left: 5px;
	}
</style>
